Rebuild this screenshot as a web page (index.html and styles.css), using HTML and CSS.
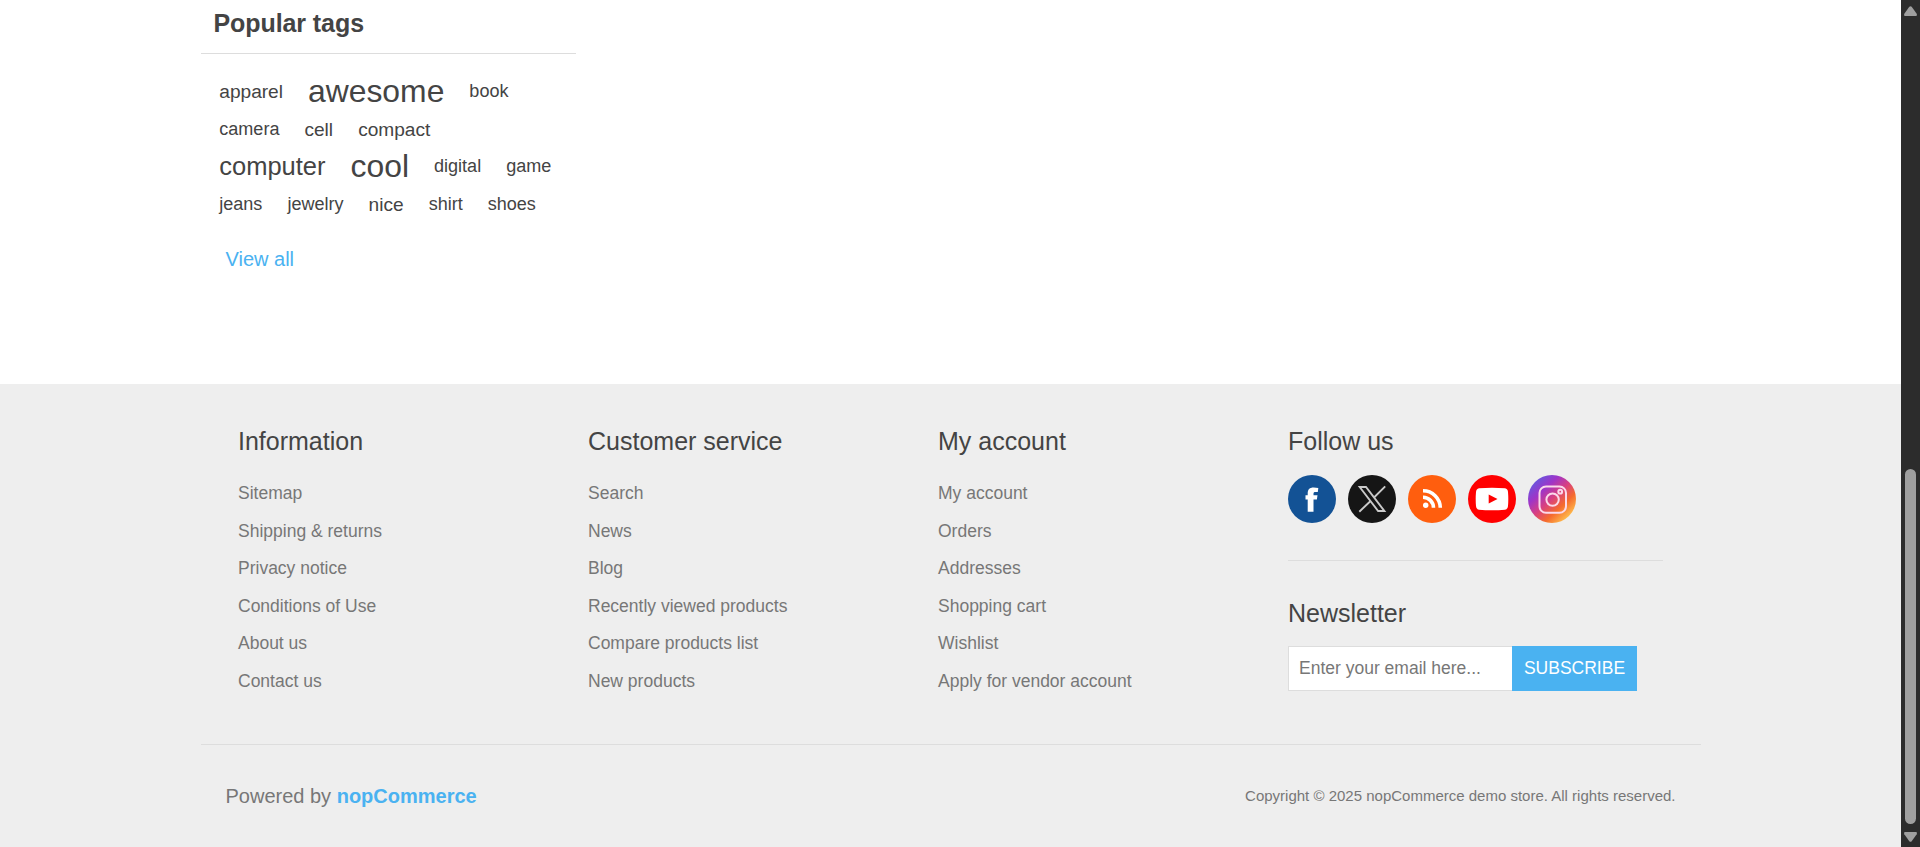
FILE: index.html
```html
<!DOCTYPE html>
<html lang="en">
<head>
<meta charset="utf-8">
<title>nopCommerce demo store</title>
<link rel="stylesheet" href="styles.css">
</head>
<body>
<div class="page">
  <main class="main">
    <aside class="block">
      <h2 class="block-title">Popular tags</h2>
      <ul class="tags">
        <li class="tag tag-m">apparel</li>
        <li class="tag tag-xl">awesome</li>
        <li class="tag">book</li>
        <li class="tag">camera</li>
        <li class="tag tag-m">cell</li>
        <li class="tag tag-m">compact</li>
        <li class="tag tag-l">computer</li>
        <li class="tag tag-xl">cool</li>
        <li class="tag">digital</li>
        <li class="tag">game</li>
        <li class="tag">jeans</li>
        <li class="tag">jewelry</li>
        <li class="tag tag-m">nice</li>
        <li class="tag">shirt</li>
        <li class="tag">shoes</li>
      </ul>
      <a class="view-all">View all</a>
    </aside>
  </main>
  <footer class="footer">
    <div class="footer-inner">
      <div class="footer-upper">
        <section class="column">
          <h2 class="column-title">Information</h2>
          <ul class="links">
            <li>Sitemap</li><li>Shipping &amp; returns</li><li>Privacy notice</li><li>Conditions of Use</li><li>About us</li><li>Contact us</li>
          </ul>
        </section>
        <section class="column">
          <h2 class="column-title">Customer service</h2>
          <ul class="links">
            <li>Search</li><li>News</li><li>Blog</li><li>Recently viewed products</li><li>Compare products list</li><li>New products</li>
          </ul>
        </section>
        <section class="column">
          <h2 class="column-title">My account</h2>
          <ul class="links">
            <li>My account</li><li>Orders</li><li>Addresses</li><li>Shopping cart</li><li>Wishlist</li><li>Apply for vendor account</li>
          </ul>
        </section>
        <section class="follow">
          <h2 class="column-title">Follow us</h2>
          <div class="socials">
            <svg class="social" viewBox="0 0 48 48"><circle cx="24" cy="24" r="24" fill="#135295"/><path fill="#fff" d="M19.700 36.700V24.500h-2.200v-4.300h2.200v-1.700c0-4 1.800-6 6-6 1.500 0 3.200.2 4.600.5l-.5 4h-2.300c-1.600 0-2 .7-2 1.700v1.500h4l-.6 4.300h-3.400v12.200z"/></svg>
            <svg class="social" viewBox="0 0 48 48"><circle cx="24" cy="24" r="24" fill="#151515"/><g fill="none" stroke="#c9c9c9" stroke-width="1.900"><path d="M11.700 12h6.300l18.400 24h-6.300z"/><path d="M37.200 11.300L26 22.500M22.300 26.300L11.300 36.700"/></g></svg>
            <svg class="social" viewBox="0 0 48 48"><circle cx="24" cy="24" r="24" fill="#ff5e0e"/><circle cx="17.700" cy="30.300" r="2.700" fill="#fff"/><g fill="none" stroke="#fff" stroke-width="3.600"><path d="M15 22.300a10.500 10.500 0 0 1 10.500 10.500"/><path d="M15 15.800a17.300 17.300 0 0 1 17.300 17"/></g></svg>
            <svg class="social" viewBox="0 0 48 48"><circle cx="24" cy="24" r="24" fill="#f00"/><path fill="#fff" d="M11 13.300Q24 12 37 13.300Q39.800 13.700 40 17Q40.600 24 40 31Q39.700 34.300 37 34.700Q24 36 11 34.700Q8.300 34.300 8 31Q7.400 24 8 17Q8.300 13.700 11 13.300z"/><path fill="#f00" d="M20.700 19.500v9l8.800-4.500z"/></svg>
            <svg class="social" viewBox="0 0 48 48"><defs><linearGradient id="ig" x1=".16" y1=".12" x2=".86" y2=".88"><stop offset="0" stop-color="#6b54dc"/><stop offset=".24" stop-color="#9e35c8"/><stop offset=".48" stop-color="#d73f83"/><stop offset=".73" stop-color="#f56a2d"/><stop offset="1" stop-color="#ffc04e"/></linearGradient></defs><circle cx="24" cy="24" r="24" fill="url(#ig)"/><g fill="none" stroke="#fbd9ea" stroke-width="2"><rect x="11.500" y="11.500" width="26.500" height="26.300" rx="6.500"/><circle cx="24.600" cy="24.600" r="6.200"/><circle cx="32.200" cy="16.700" r="1.900"/></g></svg>
          </div>
          <h2 class="column-title newsletter-title">Newsletter</h2>
          <div class="newsletter">
            <input class="email" type="text" placeholder="Enter your email here..." aria-label="Email">
            <button class="subscribe">SUBSCRIBE</button>
          </div>
        </section>
      </div>
      <div class="footer-lower">
        <div class="powered">Powered by <b class="brand">nopCommerce</b></div>
        <div class="copyright">Copyright © 2025 nopCommerce demo store. All rights reserved.</div>
      </div>
    </div>
  </footer>
</div>
<div class="scrollbar">
  <svg class="arrow" viewBox="0 0 13 10"><path d="M5.300.800q1.200-1.200 2.400 0l5 7q.7 2.200-.8 2.200h-10.800q-1.500 0-.8-2.200z"/></svg>
  <div class="thumb"></div>
  <svg class="arrow arrow-down" viewBox="0 0 13 10"><path d="M5.300.800q1.200-1.200 2.400 0l5 7q.7 2.200-.8 2.200h-10.800q-1.500 0-.8-2.200z"/></svg>
</div>
</body>
</html>
```

FILE: styles.css
```css
* { box-sizing: border-box; margin: 0; padding: 0; }
body {
  display: flex;
  height: 847px;
  overflow: hidden;
  background: #fff;
  font-family: "Liberation Sans", Arial, sans-serif;
  font-size: 17.5px;
  color: #777;
}
ul { list-style: none; }
.page { flex: 1; display: flex; flex-direction: column; }
.main { height: 384px; padding-left: 201px; }
.block { width: 375px; }
.block-title {
  height: 54px;
  padding: 8px 12.5px 0;
  border-bottom: 1px solid #ddd;
  font-size: 25px;
  line-height: 30px;
  letter-spacing: -0.08px;
  color: #444;
}
.tags {
  display: flex;
  flex-wrap: wrap;
  column-gap: 25px;
  width: 356px;
  padding: 19px 0 0 18.25px;
  font-size: 21.25px;
  color: #444;
}
.tag { height: 37.5px; font-size: 85%; line-height: 37.5px; }
.tag-m { font-size: 90%; }
.tag-l { font-size: 120%; }
.tag-xl { font-size: 150%; }
.view-all {
  display: block;
  margin: 21px 0 0 24.5px;
  font-size: 20px;
  line-height: 30px;
  color: #4ab2f1;
}
.footer { flex: 1; background: #eee; }
.footer-inner { width: 1500px; margin-left: 201px; }
.footer-upper {
  display: flex;
  height: 361px;
  padding: 41px 0 0 37px;
  border-bottom: 1px solid #ddd;
}
.column { width: 350px; }
.column-title { font-size: 25px; font-weight: 400; line-height: 32px; color: #444; }
.links { margin-top: 18px; line-height: 37.5px; }
.follow { width: 375px; }
.socials {
  display: flex;
  gap: 12px;
  margin-top: 18px;
  padding-bottom: 37px;
  border-bottom: 1px solid #ddd;
}
.social { width: 48px; height: 48px; }
.newsletter-title { margin-top: 36px; }
.newsletter { display: flex; height: 45px; margin-top: 17px; }
.email {
  width: 224px;
  padding: 0 10px;
  border: 1px solid #ddd;
  border-right: 0;
  background: #fff;
  font: inherit;
}
.email::placeholder { color: #777; }
.subscribe { width: 125px; border: 0; background: #4ab2f1; color: #fff; font: inherit; }
.footer-lower {
  display: flex;
  justify-content: space-between;
  align-items: center;
  height: 102px;
  padding: 0 25.5px 0 24.5px;
}
.powered { font-size: 20px; }
.brand { color: #4ab2f1; }
.copyright { padding-bottom: 2px; font-size: 15px; }
.scrollbar {
  display: flex;
  flex-direction: column;
  align-items: center;
  width: 19px;
  padding: 6px 0 5px;
  background: #2c2c2c;
}
.arrow { width: 13px; height: 10px; fill: #9f9f9f; }
.arrow-down { margin-top: 8px; transform: rotate(180deg); }
.thumb { width: 11px; height: 355px; margin-top: 453px; border-radius: 6px; background: #9f9f9f; }
```
